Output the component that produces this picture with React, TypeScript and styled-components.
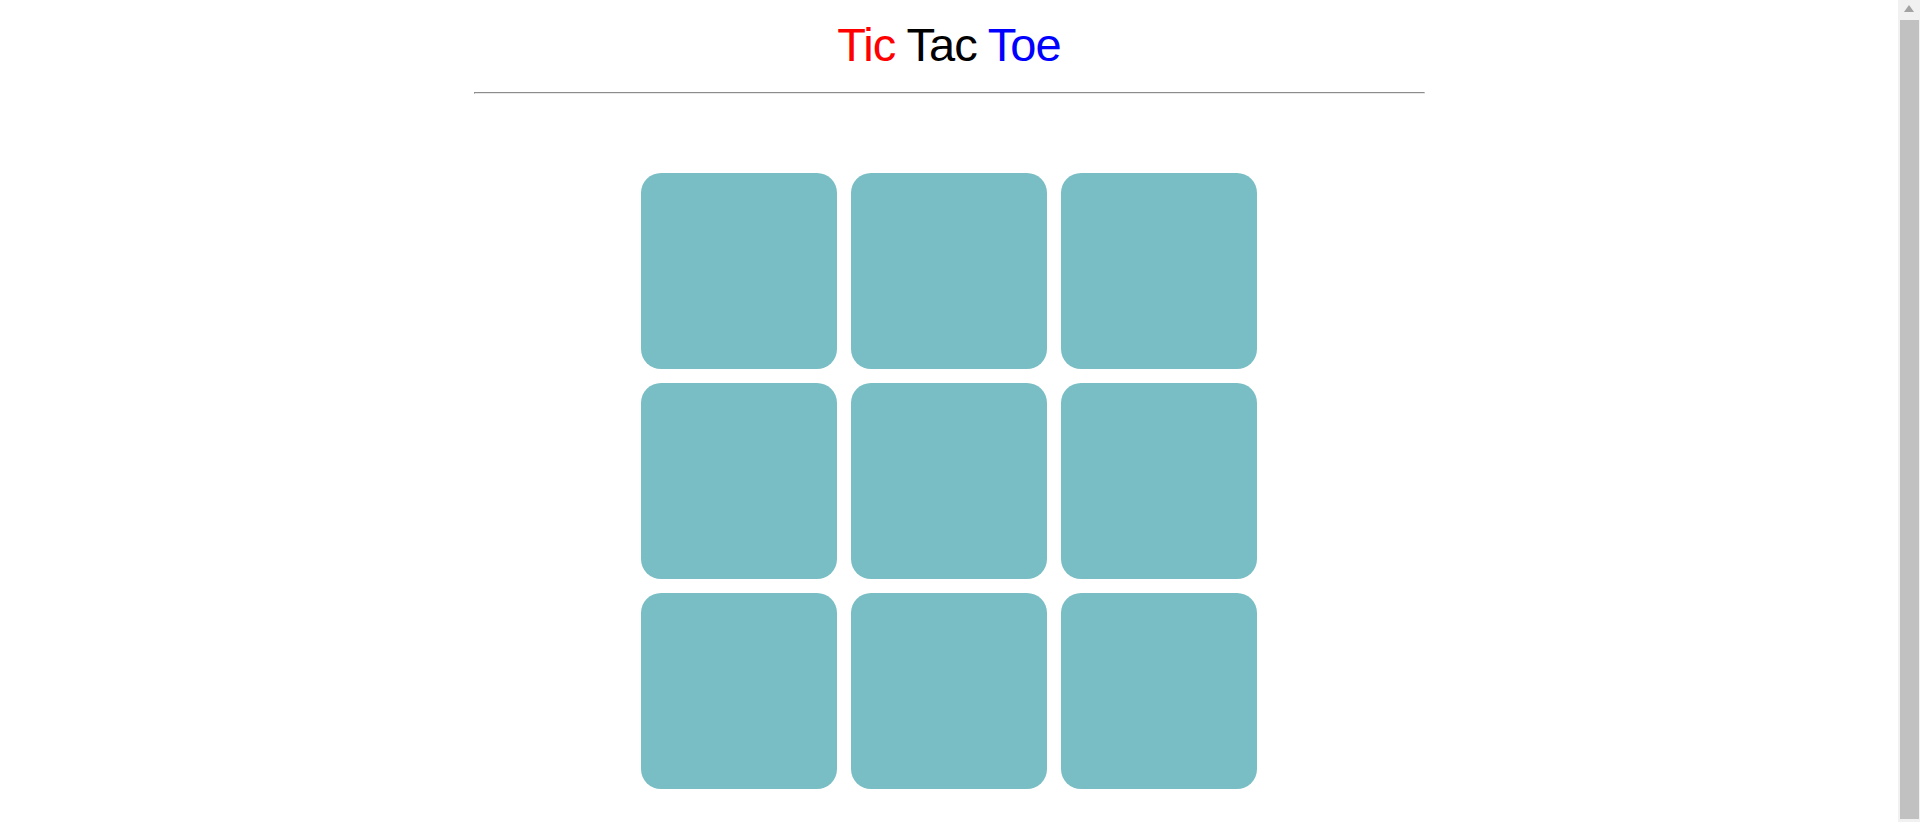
import React from "react";
import styled, { createGlobalStyle } from "styled-components";

const GlobalStyle = createGlobalStyle`
  html, body {
    margin: 0;
    padding: 0;
    background: #ffffff;
    overflow: hidden;
  }
  body {
    font-family: "Liberation Sans", Arial, sans-serif;
  }
`;

const Shell = styled.div`
  display: flex;
  height: 100vh;
  overflow: hidden;
`;

const Page = styled.main`
  flex: 1;
  min-width: 0;
  display: flex;
  flex-direction: column;
  align-items: center;
  padding-bottom: 40px;
`;

const Title = styled.h1`
  margin: 17px 0 20px;
  font-size: 47px;
  letter-spacing: -1px;
  font-weight: normal;
  line-height: 55px;
  text-align: center;
  color: #000000;
`;

const Word = styled.span<{ $color: string }>`
  color: ${(p) => p.$color};
`;

const Divider = styled.hr`
  width: 50%;
  margin: 0 auto;
  border-style: solid;
  border-width: 1px;
  border-color: #8c8c8c #e8e8e8 #e8e8e8 #8c8c8c;
`;

const Board = styled.div`
  margin-top: 79px;
  display: grid;
  grid-template-columns: repeat(3, 196px);
  grid-auto-rows: 196px;
  gap: 14px;
`;

const Cell = styled.button`
  width: 196px;
  height: 196px;
  border: none;
  padding: 0;
  border-radius: 20px;
  background: #79bec5;
  cursor: pointer;
`;

const ScrollRail = styled.div`
  width: 22px;
  flex: none;
  background: #f1f1f1;
  display: flex;
  flex-direction: column;
  align-items: center;
`;

const ScrollArrow = styled.div`
  height: 20px;
  width: 100%;
  display: flex;
  align-items: center;
  justify-content: center;
`;

const ArrowUp = styled.span`
  width: 0;
  height: 0;
  border-left: 5px solid transparent;
  border-right: 5px solid transparent;
  border-bottom: 7px solid #a3a3a3;
  margin-bottom: 3px;
`;

const ScrollThumb = styled.div`
  width: 19px;
  height: 799px;
  background: #c1c1c1;
`;

export default function App() {
  const cells = Array.from({ length: 9 }, (_, i) => i);
  return (
    <>
      <GlobalStyle />
      <Shell>
        <Page>
          <Title>
            <Word $color="#ff0000">Tic</Word> <Word $color="#000000">Tac</Word>{" "}
            <Word $color="#0000ff">Toe</Word>
          </Title>
          <Divider />
          <Board>
            {cells.map((i) => (
              <Cell key={i} aria-label={`cell ${i + 1}`} />
            ))}
          </Board>
        </Page>
        <ScrollRail aria-hidden="true">
          <ScrollArrow>
            <ArrowUp />
          </ScrollArrow>
          <ScrollThumb />
        </ScrollRail>
      </Shell>
    </>
  );
}
